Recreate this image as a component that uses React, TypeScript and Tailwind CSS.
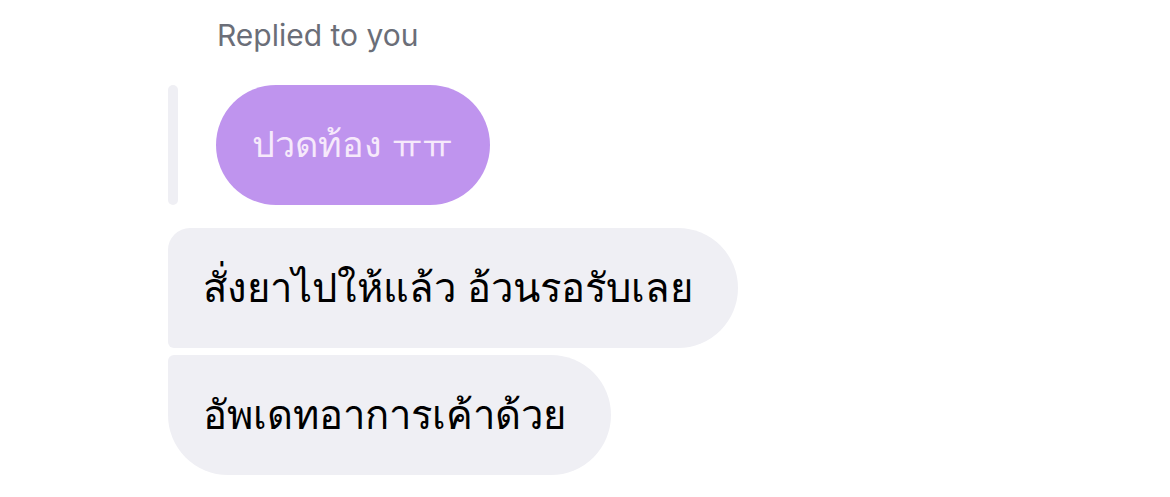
export default function App() {
  return (
    <div className="w-[1170px] h-[497px] bg-white font-['Liberation_Sans','DejaVu_Sans',sans-serif]">
      <div className="pl-[168px] pt-[16px] flex flex-col">
        <div className="pl-[49px] text-[30px] leading-[38px] text-[#6b6e78] font-['Inter',sans-serif]">Replied to you</div>
        <div className="mt-[31px] flex gap-[38px]">
          <div className="w-[10px] h-[120px] rounded-full bg-[#efeff4]" />
          <div className="h-[120px] pl-[36px] pr-[37px] flex items-center rounded-full bg-[#bf94ee] text-[#f6e9fb] text-[36px]">
            <span>ปวดท้อง</span>
            <span className="ml-[10px] text-[33px] font-['Noto_Sans_CJK_KR',sans-serif]">ㅠㅠ</span>
          </div>
        </div>
        <div className="mt-[23px] flex flex-col items-start gap-[7px]">
          <div className="h-[120px] pl-[35px] pr-[45px] flex items-center bg-[#efeff4] rounded-tl-[22px] rounded-bl-[6px] rounded-r-[60px] text-[40px] text-black">
            สั่งยาไปให้แล้ว อ้วนรอรับเลย
          </div>
          <div className="h-[120px] pl-[35px] pr-[45px] flex items-center bg-[#efeff4] rounded-tl-[6px] rounded-bl-[60px] rounded-r-[60px] text-[40px] text-black">
            อัพเดทอาการเค้าด้วย
          </div>
        </div>
      </div>
    </div>
  );
}
